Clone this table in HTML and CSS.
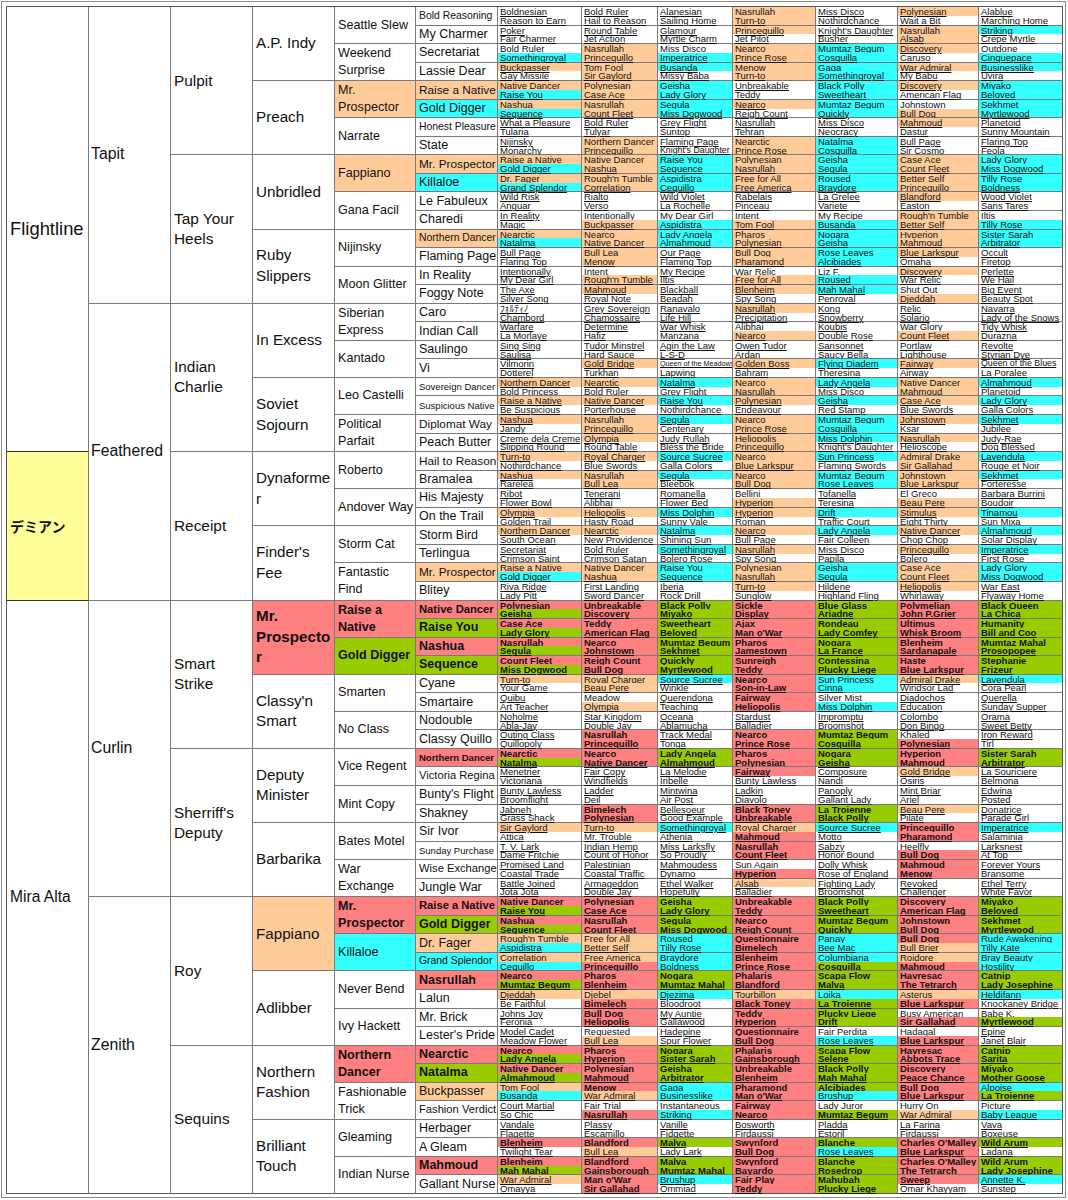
FILE: index.html
```html
<!DOCTYPE html>
<html lang="ja">
<head>
<meta charset="utf-8">
<title>デミアン 血統表</title>
<link rel="stylesheet" href="styles.css">
</head>
<body>
<div class="frame">
<div class="ped">
 <div class="col g1">
  <div class="n sire">Flightline</div>
  <div class="n self">デミアン</div>
  <div class="n dam">Mira Alta</div>
 </div>
 <div class="col g2">
  <div class="n">Tapit</div><div class="n">Feathered</div><div class="n">Curlin</div><div class="n">Zenith</div>
 </div>
 <div class="col g3">
  <div class="n">Pulpit</div><div class="n">Tap Your Heels</div><div class="n">Indian Charlie</div><div class="n">Receipt</div>
  <div class="n">Smart Strike</div><div class="n">Sherriff's Deputy</div><div class="n">Roy</div><div class="n">Sequins</div>
 </div>
 <div class="col g4">
  <div class="n">A.P. Indy</div><div class="n">Preach</div><div class="n">Unbridled</div><div class="n">Ruby Slippers</div>
  <div class="n">In Excess</div><div class="n">Soviet Sojourn</div><div class="n">Dynaformer</div><div class="n">Finder's Fee</div>
  <div class="n r">Mr. Prospector</div><div class="n">Classy'n Smart</div><div class="n">Deputy Minister</div><div class="n">Barbarika</div>
  <div class="n o">Fappiano</div><div class="n">Adlibber</div><div class="n">Northern Fashion</div><div class="n">Brilliant Touch</div>
 </div>
 <div class="col g5">
  <div class="n">Seattle Slew</div><div class="n">Weekend Surprise</div><div class="n o">Mr. Prospector</div><div class="n">Narrate</div>
  <div class="n o">Fappiano</div><div class="n">Gana Facil</div><div class="n">Nijinsky</div><div class="n">Moon Glitter</div>
  <div class="n">Siberian Express</div><div class="n">Kantado</div><div class="n">Leo Castelli</div><div class="n">Political Parfait</div>
  <div class="n">Roberto</div><div class="n">Andover Way</div><div class="n">Storm Cat</div><div class="n">Fantastic Find</div>
  <div class="n r">Raise a Native</div><div class="n g">Gold Digger</div><div class="n">Smarten</div><div class="n">No Class</div>
  <div class="n">Vice Regent</div><div class="n">Mint Copy</div><div class="n">Bates Motel</div><div class="n">War Exchange</div>
  <div class="n r">Mr. Prospector</div><div class="n c">Killaloe</div><div class="n">Never Bend</div><div class="n">Ivy Hackett</div>
  <div class="n r">Northern Dancer</div><div class="n">Fashionable Trick</div><div class="n">Gleaming</div><div class="n">Indian Nurse</div>
 </div>
 <div class="col g6">
  <div class="n f10">Bold Reasoning</div><div class="n">My Charmer</div><div class="n">Secretariat</div><div class="n">Lassie Dear</div>
  <div class="n o f12">Raise a Native</div><div class="n c">Gold Digger</div><div class="n f10">Honest Pleasure</div><div class="n">State</div>
  <div class="n o f12">Mr. Prospector</div><div class="n c">Killaloe</div><div class="n">Le Fabuleux</div><div class="n">Charedi</div>
  <div class="n o f10">Northern Dancer</div><div class="n">Flaming Page</div><div class="n">In Reality</div><div class="n">Foggy Note</div>
  <div class="n">Caro</div><div class="n">Indian Call</div><div class="n">Saulingo</div><div class="n">Vi</div>
  <div class="n f9">Sovereign Dancer</div><div class="n f9">Suspicious Native</div><div class="n f12">Diplomat Way</div><div class="n">Peach Butter</div>
  <div class="n f12">Hail to Reason</div><div class="n">Bramalea</div><div class="n">His Majesty</div><div class="n">On the Trail</div>
  <div class="n">Storm Bird</div><div class="n">Terlingua</div><div class="n o f12">Mr. Prospector</div><div class="n">Blitey</div>
  <div class="n r f11">Native Dancer</div><div class="n g">Raise You</div><div class="n r">Nashua</div><div class="n g">Sequence</div>
  <div class="n">Cyane</div><div class="n">Smartaire</div><div class="n">Nodouble</div><div class="n">Classy Quillo</div>
  <div class="n r f9">Northern Dancer</div><div class="n f11">Victoria Regina</div><div class="n">Bunty's Flight</div><div class="n">Shakney</div>
  <div class="n">Sir Ivor</div><div class="n f9">Sunday Purchase</div><div class="n f11">Wise Exchange</div><div class="n">Jungle War</div>
  <div class="n r f11">Raise a Native</div><div class="n g">Gold Digger</div><div class="n o">Dr. Fager</div><div class="n c f10">Grand Splendor</div>
  <div class="n r">Nasrullah</div><div class="n">Lalun</div><div class="n">Mr. Brick</div><div class="n">Lester's Pride</div>
  <div class="n r">Nearctic</div><div class="n g">Natalma</div><div class="n o">Buckpasser</div><div class="n f11">Fashion Verdict</div>
  <div class="n">Herbager</div><div class="n">A Gleam</div><div class="n r">Mahmoud</div><div class="n">Gallant Nurse</div>
 </div>
 <div class="anc">
  <div class="p"><span>Boldnesian</span><span>Bold Ruler</span><span>Alanesian</span><span class="o">Nasrullah</span><span>Miss Disco</span><span class="o">Polynesian</span><span>Alablue</span><span>Reason to Earn</span><span>Hail to Reason</span><span>Sailing Home</span><span class="o">Turn-to</span><span>Nothirdchance</span><span>Wait a Bit</span><span>Marching Home</span></div>
  <div class="p"><span>Poker</span><span>Round Table</span><span>Glamour</span><span class="o">Princequillo</span><span>Knight's Daughter</span><span class="o">Nasrullah</span><span class="c">Striking</span><span>Fair Charmer</span><span>Jet Action</span><span>Myrtle Charm</span><span>Jet Pilot</span><span>Busher</span><span class="o">Alsab</span><span>Crepe Myrtle</span></div>
  <div class="p"><span>Bold Ruler</span><span class="o">Nasrullah</span><span>Miss Disco</span><span class="o">Nearco</span><span class="c">Mumtaz Begum</span><span class="o">Discovery</span><span>Outdone</span><span class="c">Somethingroyal</span><span class="o">Princequillo</span><span class="c">Imperatrice</span><span class="o">Prince Rose</span><span class="c">Cosquilla</span><span>Caruso</span><span class="c">Cinquepace</span></div>
  <div class="p"><span class="o">Buckpasser</span><span class="o">Tom Fool</span><span class="c">Busanda</span><span class="o">Menow</span><span class="c">Gaga</span><span class="o">War Admiral</span><span class="c">Businesslike</span><span>Gay Missile</span><span class="o">Sir Gaylord</span><span>Missy Baba</span><span class="o">Turn-to</span><span class="c">Somethingroyal</span><span>My Babu</span><span>Uvira</span></div>
  <div class="p"><span class="o">Native Dancer</span><span class="o">Polynesian</span><span class="c">Geisha</span><span>Unbreakable</span><span class="c">Black Polly</span><span class="o">Discovery</span><span class="c">Miyako</span><span class="c">Raise You</span><span class="o">Case Ace</span><span class="c">Lady Glory</span><span>Teddy</span><span class="c">Sweetheart</span><span>American Flag</span><span class="c">Beloved</span></div>
  <div class="p"><span class="o">Nashua</span><span class="o">Nasrullah</span><span class="c">Segula</span><span class="o">Nearco</span><span class="c">Mumtaz Begum</span><span>Johnstown</span><span class="c">Sekhmet</span><span class="c">Sequence</span><span class="o">Count Fleet</span><span class="c">Miss Dogwood</span><span>Reigh Count</span><span class="c">Quickly</span><span class="o">Bull Dog</span><span class="c">Myrtlewood</span></div>
  <div class="p"><span>What a Pleasure</span><span>Bold Ruler</span><span>Grey Flight</span><span>Nasrullah</span><span>Miss Disco</span><span class="o">Mahmoud</span><span>Planetoid</span><span>Tularia</span><span>Tulyar</span><span>Suntop</span><span>Tehran</span><span>Neocracy</span><span>Dastur</span><span>Sunny Mountain</span></div>
  <div class="p"><span>Nijinsky</span><span class="o">Northern Dancer</span><span>Flaming Page</span><span class="o">Nearctic</span><span class="c">Natalma</span><span>Bull Page</span><span>Flaring Top</span><span>Monarchy</span><span class="o">Princequillo</span><span class="t9">Knight's Daughter</span><span class="o">Prince Rose</span><span class="c">Cosquilla</span><span>Sir Cosmo</span><span>Feola</span></div>
  <div class="p"><span class="o">Raise a Native</span><span class="o">Native Dancer</span><span class="c">Raise You</span><span class="o">Polynesian</span><span class="c">Geisha</span><span class="o">Case Ace</span><span class="c">Lady Glory</span><span class="c">Gold Digger</span><span class="o">Nashua</span><span class="c">Sequence</span><span class="o">Nasrullah</span><span class="c">Segula</span><span class="o">Count Fleet</span><span class="c">Miss Dogwood</span></div>
  <div class="p"><span class="o">Dr. Fager</span><span class="o">Rough'n Tumble</span><span class="c">Aspidistra</span><span class="o">Free for All</span><span class="c">Roused</span><span class="o">Better Self</span><span class="c">Tilly Rose</span><span class="c">Grand Splendor</span><span class="o">Correlation</span><span class="c">Cequillo</span><span class="o">Free America</span><span class="c">Braydore</span><span class="o">Princequillo</span><span class="c">Boldness</span></div>
  <div class="p"><span>Wild Risk</span><span>Rialto</span><span>Wild Violet</span><span>Rabelais</span><span>La Grelee</span><span class="o">Blandford</span><span>Wood Violet</span><span>Anguar</span><span>Verso</span><span>La Rochelle</span><span>Pinceau</span><span>Variete</span><span>Easton</span><span>Sans Tares</span></div>
  <div class="p"><span>In Reality</span><span>Intentionally</span><span>My Dear Girl</span><span>Intent</span><span>My Recipe</span><span class="o">Rough'n Tumble</span><span>Iltis</span><span>Magic</span><span class="o">Buckpasser</span><span class="c">Aspidistra</span><span class="o">Tom Fool</span><span class="c">Busanda</span><span class="o">Better Self</span><span class="c">Tilly Rose</span></div>
  <div class="p"><span class="o">Nearctic</span><span class="o">Nearco</span><span class="c">Lady Angela</span><span class="o">Pharos</span><span class="c">Nogara</span><span class="o">Hyperion</span><span class="c">Sister Sarah</span><span class="c">Natalma</span><span class="o">Native Dancer</span><span class="c">Almahmoud</span><span class="o">Polynesian</span><span class="c">Geisha</span><span class="o">Mahmoud</span><span class="c">Arbitrator</span></div>
  <div class="p"><span>Bull Page</span><span class="o">Bull Lea</span><span>Our Page</span><span class="o">Bull Dog</span><span class="c">Rose Leaves</span><span class="o">Blue Larkspur</span><span>Occult</span><span>Flaring Top</span><span class="o">Menow</span><span>Flaming Top</span><span class="o">Pharamond</span><span class="c">Alcibiades</span><span>Omaha</span><span>Firetop</span></div>
  <div class="p"><span>Intentionally</span><span>Intent</span><span>My Recipe</span><span>War Relic</span><span>Liz F.</span><span class="o">Discovery</span><span>Perlette</span><span>My Dear Girl</span><span class="o">Rough'n Tumble</span><span>Iltis</span><span class="o">Free for All</span><span class="c">Roused</span><span>War Relic</span><span>We Hail</span></div>
  <div class="p"><span>The Axe</span><span class="o">Mahmoud</span><span>Blackball</span><span class="o">Blenheim</span><span class="c">Mah Mahal</span><span>Shut Out</span><span>Big Event</span><span>Silver Song</span><span>Royal Note</span><span>Beadah</span><span>Spy Song</span><span>Penroval</span><span class="o">Djeddah</span><span>Beauty Spot</span></div>
  <div class="p"><span>ﾌｫﾙﾃｨﾉ</span><span>Grey Sovereign</span><span>Ranavalo</span><span class="o">Nasrullah</span><span>Kong</span><span>Relic</span><span>Navarra</span><span>Chambord</span><span>Chamossaire</span><span>Life Hill</span><span>Precipitation</span><span>Snowberry</span><span>Solario</span><span>Lady of the Snows</span></div>
  <div class="p"><span>Warfare</span><span>Determine</span><span>War Whisk</span><span>Alibhai</span><span>Koubis</span><span>War Glory</span><span>Tidy Whisk</span><span>La Morlaye</span><span>Hafiz</span><span>Manzana</span><span class="o">Nearco</span><span>Double Rose</span><span class="o">Count Fleet</span><span>Durazna</span></div>
  <div class="p"><span>Sing Sing</span><span>Tudor Minstrel</span><span>Agin the Law</span><span>Owen Tudor</span><span>Sansonnet</span><span>Portlaw</span><span>Revolte</span><span>Saulisa</span><span>Hard Sauce</span><span>L-S-D</span><span>Ardan</span><span>Saucy Bella</span><span>Lighthouse</span><span>Styrian Dye</span></div>
  <div class="p"><span>Vilmorin</span><span class="o">Gold Bridge</span><span class="t7">Queen of the Meadows</span><span class="o">Golden Boss</span><span class="c">Flying Diadem</span><span class="o">Fairway</span><span class="t9">Queen of the Blues</span><span>Dotterel</span><span>Turkhan</span><span>Lapwing</span><span>Bahram</span><span>Theresina</span><span>Airway</span><span>La Poralee</span></div>
  <div class="p"><span class="o">Northern Dancer</span><span class="o">Nearctic</span><span class="c">Natalma</span><span class="o">Nearco</span><span class="c">Lady Angela</span><span class="o">Native Dancer</span><span class="c">Almahmoud</span><span>Bold Princess</span><span>Bold Ruler</span><span>Grey Flight</span><span class="o">Nasrullah</span><span>Miss Disco</span><span class="o">Mahmoud</span><span>Planetoid</span></div>
  <div class="p"><span class="o">Raise a Native</span><span class="o">Native Dancer</span><span class="c">Raise You</span><span class="o">Polynesian</span><span class="c">Geisha</span><span class="o">Case Ace</span><span class="c">Lady Glory</span><span>Be Suspicious</span><span>Porterhouse</span><span>Nothirdchance</span><span>Endeavour</span><span>Red Stamp</span><span>Blue Swords</span><span>Galla Colors</span></div>
  <div class="p"><span class="o">Nashua</span><span class="o">Nasrullah</span><span class="c">Segula</span><span class="o">Nearco</span><span class="c">Mumtaz Begum</span><span class="o">Johnstown</span><span class="c">Sekhmet</span><span>Jandy</span><span class="o">Princequillo</span><span>Centenary</span><span class="o">Prince Rose</span><span class="c">Cosquilla</span><span>Ksar</span><span>Jubilee</span></div>
  <div class="p"><span>Creme dela Creme</span><span class="o">Olympia</span><span>Judy Rullah</span><span class="o">Heliopolis</span><span class="c">Miss Dolphin</span><span class="o">Nasrullah</span><span>Judy-Rae</span><span>Slipping Round</span><span>Round Table</span><span>Bless the Bride</span><span class="o">Princequillo</span><span>Knight's Daughter</span><span>Helioscope</span><span>Dog Blessed</span></div>
  <div class="p"><span class="o">Turn-to</span><span class="o">Royal Charger</span><span class="c">Source Sucree</span><span class="o">Nearco</span><span class="c">Sun Princess</span><span class="o">Admiral Drake</span><span class="c">Lavendula</span><span>Nothirdchance</span><span>Blue Swords</span><span>Galla Colors</span><span class="o">Blue Larkspur</span><span>Flaming Swords</span><span class="o">Sir Gallahad</span><span>Rouge et Noir</span></div>
  <div class="p"><span class="o">Nashua</span><span class="o">Nasrullah</span><span class="c">Segula</span><span class="o">Nearco</span><span class="c">Mumtaz Begum</span><span class="o">Johnstown</span><span class="c">Sekhmet</span><span>Rarelea</span><span class="o">Bull Lea</span><span>Bleebok</span><span class="o">Bull Dog</span><span class="c">Rose Leaves</span><span class="o">Blue Larkspur</span><span>Forteresse</span></div>
  <div class="p"><span>Ribot</span><span>Tenerani</span><span>Romanella</span><span>Bellini</span><span>Tofanella</span><span>El Greco</span><span>Barbara Burrini</span><span>Flower Bowl</span><span>Alibhai</span><span>Flower Bed</span><span class="o">Hyperion</span><span>Teresina</span><span class="o">Beau Pere</span><span>Boudoir</span></div>
  <div class="p"><span class="o">Olympia</span><span class="o">Heliopolis</span><span class="c">Miss Dolphin</span><span class="o">Hyperion</span><span class="c">Drift</span><span class="o">Stimulus</span><span class="c">Tinamou</span><span>Golden Trail</span><span>Hasty Road</span><span>Sunny Vale</span><span>Roman</span><span>Traffic Court</span><span>Eight Thirty</span><span>Sun Mixa</span></div>
  <div class="p"><span class="o">Northern Dancer</span><span class="o">Nearctic</span><span class="c">Natalma</span><span class="o">Nearco</span><span class="c">Lady Angela</span><span class="o">Native Dancer</span><span class="c">Almahmoud</span><span>South Ocean</span><span>New Providence</span><span>Shining Sun</span><span>Bull Page</span><span>Fair Colleen</span><span>Chop Chop</span><span>Solar Display</span></div>
  <div class="p"><span>Secretariat</span><span>Bold Ruler</span><span class="c">Somethingroyal</span><span class="o">Nasrullah</span><span>Miss Disco</span><span class="o">Princequillo</span><span class="c">Imperatrice</span><span>Crimson Saint</span><span>Crimson Satan</span><span>Bolero Rose</span><span>Spy Song</span><span>Papila</span><span>Bolero</span><span>First Rose</span></div>
  <div class="p"><span class="o">Raise a Native</span><span class="o">Native Dancer</span><span class="c">Raise You</span><span class="o">Polynesian</span><span class="c">Geisha</span><span class="o">Case Ace</span><span class="c">Lady Glory</span><span class="c">Gold Digger</span><span class="o">Nashua</span><span class="c">Sequence</span><span class="o">Nasrullah</span><span class="c">Segula</span><span class="o">Count Fleet</span><span class="c">Miss Dogwood</span></div>
  <div class="p"><span>Riva Ridge</span><span>First Landing</span><span>Iberia</span><span class="o">Turn-to</span><span>Hildene</span><span class="o">Heliopolis</span><span>War East</span><span>Lady Pitt</span><span>Sword Dancer</span><span>Rock Drill</span><span>Sunglow</span><span>Highland Fling</span><span>Whirlaway</span><span>Flyaway Home</span></div>
  <div class="p"><span class="r">Polynesian</span><span class="r">Unbreakable</span><span class="g">Black Polly</span><span class="r">Sickle</span><span class="g">Blue Glass</span><span class="r">Polymelian</span><span class="g">Black Queen</span><span class="g">Geisha</span><span class="r">Discovery</span><span class="g">Miyako</span><span class="r">Display</span><span class="g">Ariadne</span><span class="r">John P.Grier</span><span class="g">La Chica</span></div>
  <div class="p"><span class="r">Case Ace</span><span class="r">Teddy</span><span class="g">Sweetheart</span><span class="r">Ajax</span><span class="g">Rondeau</span><span class="r">Ultimus</span><span class="g">Humanity</span><span class="g">Lady Glory</span><span class="r">American Flag</span><span class="g">Beloved</span><span class="r">Man o'War</span><span class="g">Lady Comfey</span><span class="r">Whisk Broom</span><span class="g">Bill and Coo</span></div>
  <div class="p"><span class="r">Nasrullah</span><span class="r">Nearco</span><span class="g">Mumtaz Begum</span><span class="r">Pharos</span><span class="g">Nogara</span><span class="r">Blenheim</span><span class="g">Mumtaz Mahal</span><span class="g">Segula</span><span class="r">Johnstown</span><span class="g">Sekhmet</span><span class="r">Jamestown</span><span class="g">La France</span><span class="r">Sardanapale</span><span class="g">Prosopopee</span></div>
  <div class="p"><span class="r">Count Fleet</span><span class="r">Reigh Count</span><span class="g">Quickly</span><span class="r">Sunreigh</span><span class="g">Contessina</span><span class="r">Haste</span><span class="g">Stephanie</span><span class="g">Miss Dogwood</span><span class="r">Bull Dog</span><span class="g">Myrtlewood</span><span class="r">Teddy</span><span class="g">Plucky Liege</span><span class="r">Blue Larkspur</span><span class="g">Frizeur</span></div>
  <div class="p"><span class="o">Turn-to</span><span class="o">Royal Charger</span><span class="c">Source Sucree</span><span class="r">Nearco</span><span class="c">Sun Princess</span><span class="o">Admiral Drake</span><span class="c">Lavendula</span><span>Your Game</span><span class="o">Beau Pere</span><span>Winkle</span><span class="r">Son-in-Law</span><span class="c">Cinna</span><span>Windsor Lad</span><span>Cora Pearl</span></div>
  <div class="p"><span>Quibu</span><span>Meadow</span><span>Querendona</span><span class="r">Fairway</span><span>Silver Mist</span><span>Diadochos</span><span>Querella</span><span>Art Teacher</span><span class="o">Olympia</span><span>Teaching</span><span class="r">Heliopolis</span><span class="c">Miss Dolphin</span><span>Education</span><span>Sunday Supper</span></div>
  <div class="p"><span>Noholme</span><span>Star Kingdom</span><span>Oceana</span><span>Stardust</span><span>Impromptu</span><span>Colombo</span><span>Orama</span><span>Abla-Jay</span><span>Double Jay</span><span>Ablamucha</span><span>Balladier</span><span>Broomshot</span><span>Don Bingo</span><span>Sweet Betty</span></div>
  <div class="p"><span>Outing Class</span><span class="r">Nasrullah</span><span>Track Medal</span><span class="r">Nearco</span><span class="g">Mumtaz Begum</span><span>Khaled</span><span>Iron Reward</span><span>Quillopoly</span><span class="r">Princequillo</span><span>Tonga</span><span class="r">Prince Rose</span><span class="g">Cosquilla</span><span class="r">Polynesian</span><span>Tirl</span></div>
  <div class="p"><span class="r">Nearctic</span><span class="r">Nearco</span><span class="g">Lady Angela</span><span class="r">Pharos</span><span class="g">Nogara</span><span class="r">Hyperion</span><span class="g">Sister Sarah</span><span class="g">Natalma</span><span class="r">Native Dancer</span><span class="g">Almahmoud</span><span class="r">Polynesian</span><span class="g">Geisha</span><span class="r">Mahmoud</span><span class="g">Arbitrator</span></div>
  <div class="p"><span>Menetrier</span><span>Fair Copy</span><span>La Melodie</span><span class="r">Fairway</span><span>Composure</span><span class="o">Gold Bridge</span><span>La Souriciere</span><span>Victoriana</span><span>Windfields</span><span>Iribelle</span><span>Bunty Lawless</span><span>Nandi</span><span>Osiris</span><span>Belmona</span></div>
  <div class="p"><span>Bunty Lawless</span><span>Ladder</span><span>Mintwina</span><span>Ladkin</span><span>Panoply</span><span>Mint Briar</span><span>Edwina</span><span>Broomflight</span><span>Deil</span><span>Air Post</span><span>Diavolo</span><span>Gallant Lady</span><span>Ariel</span><span>Posted</span></div>
  <div class="p"><span>Jabneh</span><span class="r">Bimelech</span><span>Bellesoeur</span><span class="r">Black Toney</span><span class="g">La Troienne</span><span class="o">Beau Pere</span><span>Donatrice</span><span>Grass Shack</span><span class="r">Polynesian</span><span>Good Example</span><span class="r">Unbreakable</span><span class="g">Black Polly</span><span>Pilate</span><span>Parade Girl</span></div>
  <div class="p"><span class="o">Sir Gaylord</span><span class="o">Turn-to</span><span class="c">Somethingroyal</span><span class="o">Royal Charger</span><span class="c">Source Sucree</span><span class="r">Princequillo</span><span class="c">Imperatrice</span><span>Attica</span><span>Mr. Trouble</span><span>Athenia</span><span class="r">Mahmoud</span><span>Motto</span><span class="r">Pharamond</span><span>Salaminia</span></div>
  <div class="p"><span>T. V. Lark</span><span>Indian Hemp</span><span>Miss Larksfly</span><span class="r">Nasrullah</span><span>Sabzy</span><span>Heelfly</span><span>Larksnest</span><span>Dame Fritchie</span><span>Count of Honor</span><span>So Proudly</span><span class="r">Count Fleet</span><span>Honor Bound</span><span class="r">Bull Dog</span><span>At Top</span></div>
  <div class="p"><span>Promised Land</span><span>Palestinian</span><span>Mahmoudess</span><span>Sun Again</span><span>Dolly Whisk</span><span class="r">Mahmoud</span><span>Forever Yours</span><span>Coastal Trade</span><span>Coastal Traffic</span><span>Dynamo</span><span class="r">Hyperion</span><span>Rose of England</span><span class="r">Menow</span><span>Bransome</span></div>
  <div class="p"><span>Battle Joined</span><span>Armageddon</span><span>Ethel Walker</span><span class="o">Alsab</span><span>Fighting Lady</span><span>Revoked</span><span>Ethel Terry</span><span>Jota Jota</span><span>Double Jay</span><span>Hopefully</span><span>Balladier</span><span>Broomshot</span><span>Challenger</span><span>White Favor</span></div>
  <div class="p"><span class="r">Native Dancer</span><span class="r">Polynesian</span><span class="g">Geisha</span><span class="r">Unbreakable</span><span class="g">Black Polly</span><span class="r">Discovery</span><span class="g">Miyako</span><span class="g">Raise You</span><span class="r">Case Ace</span><span class="g">Lady Glory</span><span class="r">Teddy</span><span class="g">Sweetheart</span><span class="r">American Flag</span><span class="g">Beloved</span></div>
  <div class="p"><span class="r">Nashua</span><span class="r">Nasrullah</span><span class="g">Segula</span><span class="r">Nearco</span><span class="g">Mumtaz Begum</span><span class="r">Johnstown</span><span class="g">Sekhmet</span><span class="g">Sequence</span><span class="r">Count Fleet</span><span class="g">Miss Dogwood</span><span class="r">Reigh Count</span><span class="g">Quickly</span><span class="r">Bull Dog</span><span class="g">Myrtlewood</span></div>
  <div class="p"><span class="o">Rough'n Tumble</span><span class="o">Free for All</span><span class="c">Roused</span><span class="r">Questionnaire</span><span class="c">Panay</span><span class="r">Bull Dog</span><span class="c">Rude Awakening</span><span class="c">Aspidistra</span><span class="o">Better Self</span><span class="c">Tilly Rose</span><span class="r">Bimelech</span><span class="c">Bee Mac</span><span class="o">Bull Brier</span><span class="c">Tilly Kate</span></div>
  <div class="p"><span class="o">Correlation</span><span class="o">Free America</span><span class="c">Braydore</span><span class="r">Blenheim</span><span class="c">Columbiana</span><span class="o">Roidore</span><span class="c">Bray Beauty</span><span class="c">Cequillo</span><span class="r">Princequillo</span><span class="c">Boldness</span><span class="r">Prince Rose</span><span class="g">Cosquilla</span><span class="r">Mahmoud</span><span class="c">Hostility</span></div>
  <div class="p"><span class="r">Nearco</span><span class="r">Pharos</span><span class="g">Nogara</span><span class="r">Phalaris</span><span class="g">Scapa Flow</span><span class="r">Havresac</span><span class="g">Catnip</span><span class="g">Mumtaz Begum</span><span class="r">Blenheim</span><span class="g">Mumtaz Mahal</span><span class="r">Blandford</span><span class="g">Malva</span><span class="r">The Tetrarch</span><span class="g">Lady Josephine</span></div>
  <div class="p"><span class="o">Djeddah</span><span class="o">Djebel</span><span class="c">Djezima</span><span class="o">Tourbillon</span><span class="c">Loika</span><span class="o">Asterus</span><span class="c">Heldifann</span><span>Be Faithful</span><span class="r">Bimelech</span><span>Bloodroot</span><span class="r">Black Toney</span><span class="g">La Troienne</span><span class="r">Blue Larkspur</span><span>Knockaney Bridge</span></div>
  <div class="p"><span>Johns Joy</span><span class="r">Bull Dog</span><span>My Auntie</span><span class="r">Teddy</span><span class="g">Plucky Liege</span><span>Busy American</span><span>Babe K.</span><span>Feronia</span><span class="r">Heliopolis</span><span>Gallawood</span><span class="r">Hyperion</span><span class="g">Drift</span><span class="r">Sir Gallahad</span><span class="g">Myrtlewood</span></div>
  <div class="p"><span>Model Cadet</span><span>Requested</span><span>Hadepine</span><span class="r">Questionnaire</span><span>Fair Perdita</span><span>Hadagal</span><span>Epine</span><span>Meadow Flower</span><span class="o">Bull Lea</span><span>Spur Flower</span><span class="r">Bull Dog</span><span class="c">Rose Leaves</span><span class="r">Blue Larkspur</span><span>Janet Blair</span></div>
  <div class="p"><span class="r">Nearco</span><span class="r">Pharos</span><span class="g">Nogara</span><span class="r">Phalaris</span><span class="g">Scapa Flow</span><span class="r">Havresac</span><span class="g">Catnip</span><span class="g">Lady Angela</span><span class="r">Hyperion</span><span class="g">Sister Sarah</span><span class="r">Gainsborough</span><span class="g">Selene</span><span class="r">Abbots Trace</span><span class="g">Sarita</span></div>
  <div class="p"><span class="r">Native Dancer</span><span class="r">Polynesian</span><span class="g">Geisha</span><span class="r">Unbreakable</span><span class="g">Black Polly</span><span class="r">Discovery</span><span class="g">Miyako</span><span class="g">Almahmoud</span><span class="r">Mahmoud</span><span class="g">Arbitrator</span><span class="r">Blenheim</span><span class="g">Mah Mahal</span><span class="r">Peace Chance</span><span class="g">Mother Goose</span></div>
  <div class="p"><span class="o">Tom Fool</span><span class="r">Menow</span><span class="c">Gaga</span><span class="r">Pharamond</span><span class="g">Alcibiades</span><span class="r">Bull Dog</span><span class="c">Alpoise</span><span class="c">Busanda</span><span class="o">War Admiral</span><span class="c">Businesslike</span><span class="r">Man o'War</span><span class="c">Brushup</span><span class="r">Blue Larkspur</span><span class="g">La Troienne</span></div>
  <div class="p"><span>Court Martial</span><span>Fair Trial</span><span>Instantaneous</span><span class="r">Fairway</span><span>Lady Juror</span><span>Hurry On</span><span>Picture</span><span>So Chic</span><span class="r">Nasrullah</span><span class="c">Striking</span><span class="r">Nearco</span><span class="g">Mumtaz Begum</span><span class="o">War Admiral</span><span class="c">Baby League</span></div>
  <div class="p"><span>Vandale</span><span>Plassy</span><span>Vanille</span><span>Bosworth</span><span>Pladda</span><span>La Farina</span><span>Vava</span><span>Flagette</span><span>Escamillo</span><span>Fidgette</span><span>Firdaussi</span><span>Estoril</span><span>Firdaussi</span><span>Boxeuse</span></div>
  <div class="p"><span class="r">Blenheim</span><span class="r">Blandford</span><span class="g">Malva</span><span class="r">Swynford</span><span class="g">Blanche</span><span class="r">Charles O'Malley</span><span class="g">Wild Arum</span><span>Twilight Tear</span><span class="o">Bull Lea</span><span>Lady Lark</span><span class="r">Bull Dog</span><span class="c">Rose Leaves</span><span class="r">Blue Larkspur</span><span>Ladana</span></div>
  <div class="p"><span class="r">Blenheim</span><span class="r">Blandford</span><span class="g">Malva</span><span class="r">Swynford</span><span class="g">Blanche</span><span class="r">Charles O'Malley</span><span class="g">Wild Arum</span><span class="g">Mah Mahal</span><span class="r">Gainsborough</span><span class="g">Mumtaz Mahal</span><span class="r">Bayardo</span><span class="g">Rosedrop</span><span class="r">The Tetrarch</span><span class="g">Lady Josephine</span></div>
  <div class="p"><span class="o">War Admiral</span><span class="r">Man o'War</span><span class="c">Brushup</span><span class="r">Fair Play</span><span class="g">Mahubah</span><span class="r">Sweep</span><span class="c">Annette K.</span><span>Omayya</span><span class="r">Sir Gallahad</span><span>Ommiad</span><span class="r">Teddy</span><span class="g">Plucky Liege</span><span>Omar Khayyam</span><span>Sunstep</span></div>
 </div>
</div>
</div>
</body>
</html>
```
FILE: styles.css
```css
* {
  box-sizing: border-box;
}

html,
body {
  margin: 0;
  padding: 0;
  background: #ffffff;
}

body {
  width: 1068px;
  height: 1200px;
  overflow: hidden;
  color: #111111;
  font-family: "Liberation Sans", Arial, "Noto Sans CJK JP", sans-serif;
}

.frame {
  margin: 1px 0 0 1px;
  width: 1065px;
  height: 1197px;
  border: 1px solid #8c8c8c;
  padding: 4px 2px 3px 4px;
}

.ped {
  display: grid;
  grid-template-columns: 82px 82px 82px 82px 81px 82px 565px;
  height: 1188px;
  border-top: 1px solid #555555;
  border-left: 1px solid #555555;
}

.col {
  display: flex;
  flex-direction: column;
  min-height: 0;
}

.n {
  flex: 1 1 0;
  min-height: 0;
  display: flex;
  flex-direction: column;
  justify-content: center;
  padding: 0 1px 0 3px;
  border-right: 1px solid #7a7a7a;
  border-bottom: 1px solid #7a7a7a;
  overflow: hidden;
  line-height: 1.32;
  overflow-wrap: anywhere;
}

.g1 .sire {
  flex-grow: 48;
  font-size: 18.4px;
  border-bottom-color: #333333;
}

.g1 .self {
  flex-grow: 16;
  background: #ffff99;
  font-family: "Noto Sans CJK JP", sans-serif;
  font-weight: bold;
  font-size: 14px;
  border-bottom-color: #333333;
}

.g1 .dam {
  flex-grow: 64;
  font-size: 15.6px;
}

.g2 .n {
  font-size: 15.8px;
  padding-left: 2px;
}

.g3 .n {
  font-size: 15.4px;
  line-height: 1.3;
}

.g4 .n {
  font-size: 15.2px;
  line-height: 1.36;
}

.g5 .n {
  font-size: 12.6px;
  line-height: 1.35;
}

.g6 .n {
  font-size: 12.5px;
  padding-right: 0;
  white-space: nowrap;
  line-height: 1.2;
}

.g6 .f12 {
  font-size: 11.8px;
}

.g6 .f11 {
  font-size: 11.2px;
}

.g6 .f10 {
  font-size: 10.4px;
}

.g6 .f9 {
  font-size: 9.5px;
}

.anc {
  display: flex;
  flex-direction: column;
  min-height: 0;
}

.p {
  flex: 1 1 0;
  min-height: 0;
  display: grid;
  grid-template-columns: 84px 76px 75px 83px 82px 81px 84px;
  grid-template-rows: 1fr 1fr;
  border-bottom: 1px solid #7a7a7a;
}

.p span {
  display: block;
  min-height: 0;
  padding-left: 2px;
  border-right: 1px solid #7a7a7a;
  font-size: 9.5px;
  line-height: 9px;
  white-space: nowrap;
  overflow-x: clip;
  overflow-y: visible;
  text-decoration: underline;
  text-decoration-thickness: 1px;
  text-underline-offset: 1px;
}

.p span:nth-child(7n) {
  border-right-color: #555555;
}

.anc .p:last-child,
.g6 .n:last-child,
.g5 .n:last-child,
.g4 .n:last-child,
.g3 .n:last-child,
.g2 .n:last-child,
.g1 .n:last-child {
  border-bottom-color: #555555;
}

.p .t7 {
  font-size: 7.2px;
}

.p .t9 {
  font-size: 8.8px;
}

.o {
  background: #ffcc99;
}

.c {
  background: #33ffff;
}

.r {
  background: #ff8080;
  font-weight: bold;
}

.g {
  background: #99cc00;
  font-weight: bold;
}
```
